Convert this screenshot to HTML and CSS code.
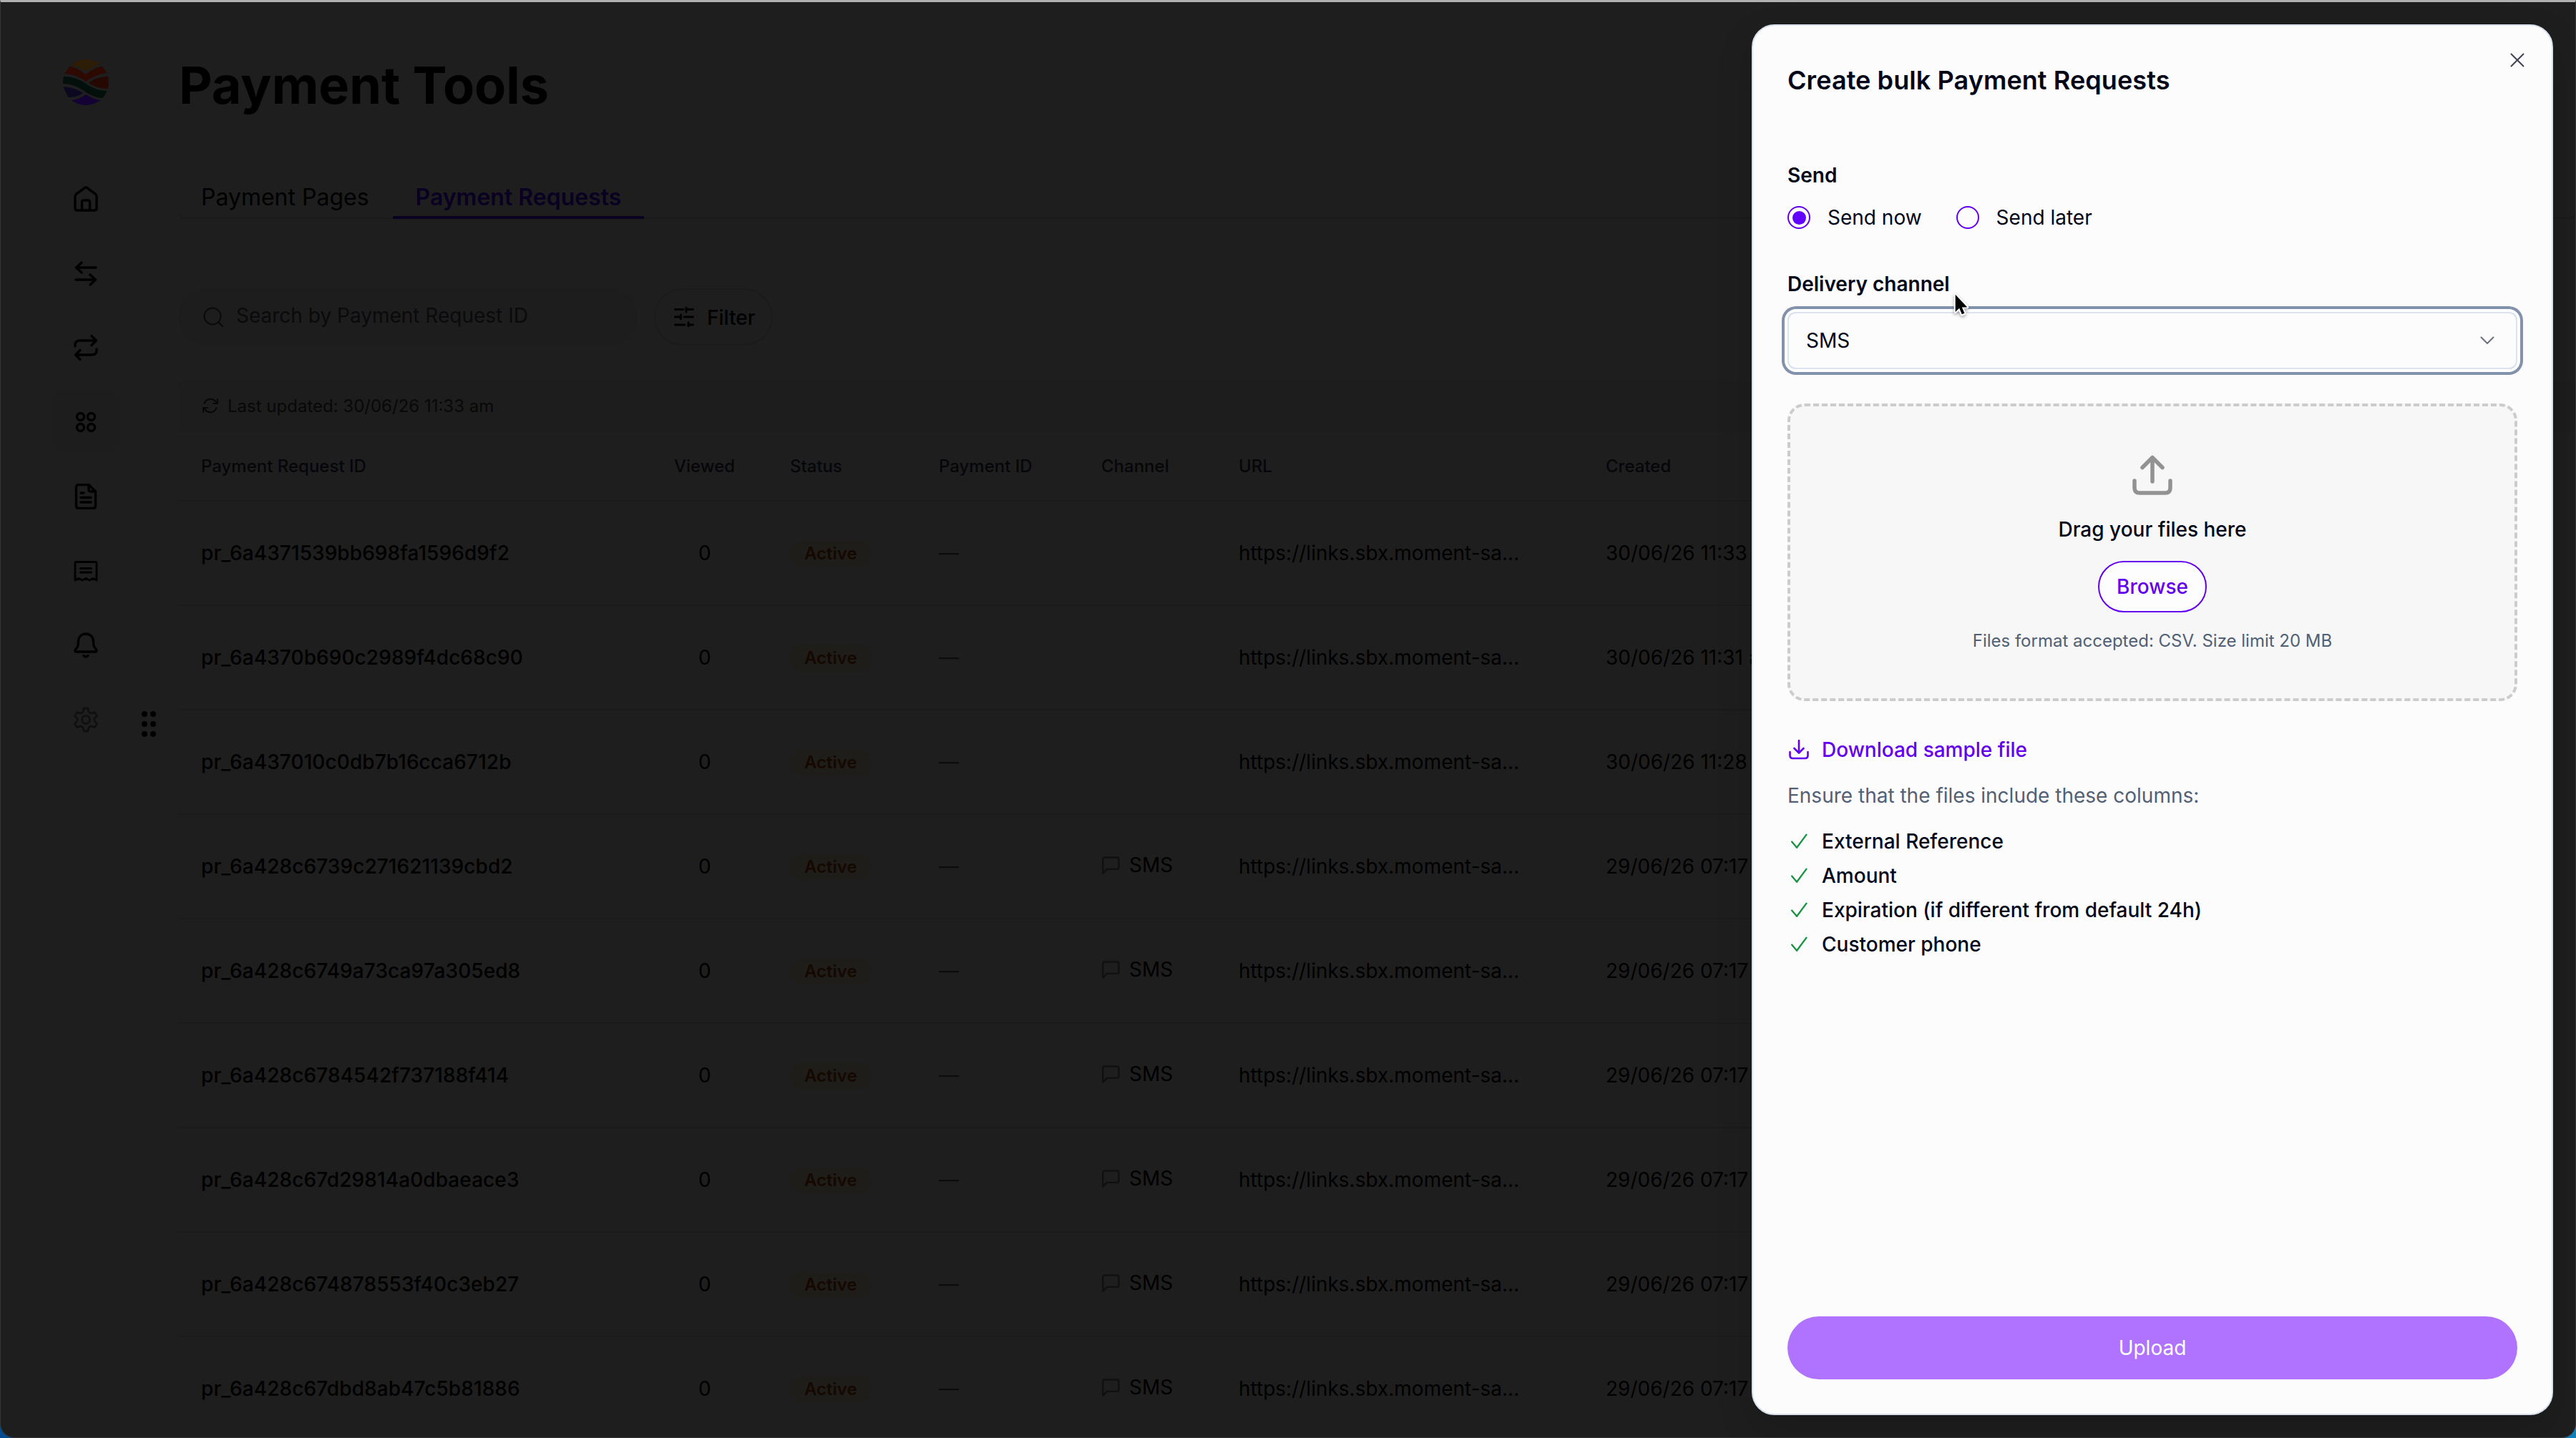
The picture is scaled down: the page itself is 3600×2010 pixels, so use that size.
FILE: index.html
```html
<!DOCTYPE html>
<html lang="en">
<head>
    <meta charset="UTF-8">
    <title>Payment Tools</title>
    <link rel="stylesheet" href="styles.css">
</head>
<body>

    <!-- Shared icons -->
    <svg class="sprite">
        <symbol id="icon-sms" viewBox="0 0 24 24"><path d="M21 15a2 2 0 0 1-2 2H7l-5 5V5a2 2 0 0 1 2-2h15a2 2 0 0 1 2 2z"/></symbol>
        <symbol id="icon-check" viewBox="0 0 24 24"><path d="M21 4 9.500 19.500 3.500 12.500"/></symbol>
    </svg>

    <div class="window">
        <nav class="sidebar">
            <svg class="logo" viewBox="0 0 64 64">
                <clipPath id="logo-clip"><circle cx="32" cy="32" r="32"/></clipPath>
                <g clip-path="url(#logo-clip)">
                    <path fill="#2e1d06" d="M0 0H64V4C50 6 40 11 32 17C26 12 20 9 12 9Z"/>
                    <path fill="#2e0902" d="M9 10C18 11 25 16 32 21C40 15 48 10 55 10L62 19C50 20 40 25 32 31C24 25 14 20 2 20Z"/>
                    <path fill="#260802" d="M36 33C44 27 52 24 64 24V41C52 41 44 38 36 33Z"/>
                    <path fill="#020f0a" d="M0 24C12 24 22 27 32 34C42 41 52 44 62 44L57 54C46 54 36 49 28 43C20 38 12 34 0 34Z"/>
                    <path fill="#0d0822" d="M0 38C12 39 20 42 28 47C22 51 16 53 7 53Z"/>
                    <path fill="#150234" d="M10 57C20 57 26 53 32 49C40 54 46 57 54 57L50 64H14Z"/>
                </g>
            </svg>
            <div class="nav-item">
                <svg class="icon" viewBox="0 0 36 36"><path d="M3 14.500Q3 12.500 4.600 11.200L16 2.800Q18 1.300 20 2.800L31.400 11.200Q33 12.500 33 14.500V31Q33 34 30 34H6Q3 34 3 31ZM12.500 34V22.500Q12.500 20 15 20H21Q23.500 20 23.500 22.500V34"/></svg>
            </div>
            <div class="nav-item">
                <svg class="icon" viewBox="0 0 36 36"><path d="M32 10H4.500M12 3 4.500 10 12 17M4 27H31.500M24 20 31.500 27 24 34"/></svg>
            </div>
            <div class="nav-item">
                <svg class="icon" viewBox="0 0 36 36"><path d="M3 16V14Q3 8 10 8H32M26 1.500 32.500 8 26 14.500M33 20V22Q33 28 26 28H4M10 21.500 3.500 28 10 34.500"/></svg>
            </div>
            <div class="nav-item active">
                <svg class="icon" viewBox="0 0 36 36"><circle cx="10.500" cy="10.500" r="5"/><circle cx="25.500" cy="10.500" r="5"/><circle cx="10.500" cy="25.500" r="5"/><circle cx="25.500" cy="25.500" r="5"/></svg>
            </div>
            <div class="nav-item">
                <svg class="icon" viewBox="0 0 36 36"><path d="M22 1.500H8Q4.500 1.500 4.500 5V31Q4.500 34.500 8 34.500H28Q31.500 34.500 31.500 31V11ZM22 1.500V8Q22 11 25 11H31.500M11 13H15M11 19.500H25M11 26H25"/></svg>
            </div>
            <div class="nav-item">
                <svg class="icon thin" viewBox="0 0 36 36"><path d="M3 31V7Q3 5.500 4.500 5.500H31.500Q33 5.500 33 7V31L28 28.500 23 31 18 28.500 13 31 8 28.500ZM10.500 14.500H25.500M10.500 20H25.500"/></svg>
            </div>
            <div class="nav-item">
                <svg class="icon" viewBox="0 0 36 36"><path d="M18 2C11 2 7.500 7 7.500 13C7.500 19 6 21 3.500 24Q2 27 4.500 27H31.500Q34 27 32.500 24C30 21 28.500 19 28.500 13C28.500 7 25 2 18 2ZM15 32.500Q18 35.500 21 32.500"/></svg>
            </div>
            <div class="nav-item muted">
                <svg class="icon thin" viewBox="0 0 36 36"><path d="M15.200 2H20.800L22 7.200 25.500 9.200 30.500 7.600 33.500 12.600 30 16.200V19.800L33.500 23.400 30.500 28.400 25.500 26.800 22 28.800 20.800 34H15.200L14 28.800 10.500 26.800 5.500 28.400 2.500 23.400 6 19.800V16.200L2.500 12.600 5.500 7.600 10.500 9.200 14 7.200Z"/><circle cx="18" cy="18" r="5.500"/></svg>
            </div>
            <svg class="drag-handle" viewBox="0 0 22 36"><circle cx="5" cy="4" r="4"/><circle cx="17" cy="4" r="4"/><circle cx="5" cy="18" r="4"/><circle cx="17" cy="18" r="4"/><circle cx="5" cy="32" r="4"/><circle cx="17" cy="32" r="4"/></svg>
        </nav>

        <main class="content">
            <h1>Payment Tools</h1>
            <div class="tabs">
                <a class="tab">Payment Pages</a>
                <a class="tab selected">Payment Requests</a>
            </div>
            <div class="toolbar">
                <div class="search">
                    <svg viewBox="0 0 28 28"><circle cx="13" cy="13" r="11.500"/><path d="M21.500 21.500 27 27"/></svg>
                    <span>Search by Payment Request ID</span>
                </div>
                <div class="filter">
                    <svg viewBox="0 0 28 28"><path d="M1.500 3.500H13M19 3.500H26.500M17 1V7M1.500 14H7.500M14 14H26.500M9.500 11V17M1.500 25H15M22 25H26.500M20 22V28"/></svg>
                    <span>Filter</span>
                </div>
            </div>
            <div class="updated">
                <svg viewBox="0 0 24 24"><path d="M22 3V9H16M2 21V15H8M3.500 9A9 9 0 0 1 19 6L22 9M20.500 15A9 9 0 0 1 5 18L2 15"/></svg>
                <span>Last updated: 30/06/26 11:33 am</span>
            </div>
            <table>
                <thead>
                    <tr>
                        <th class="col-id">Payment Request ID</th>
                        <th class="col-viewed">Viewed</th>
                        <th class="col-status">Status</th>
                        <th class="col-payment">Payment ID</th>
                        <th class="col-channel">Channel</th>
                        <th class="col-url">URL</th>
                        <th>Created</th>
                    </tr>
                </thead>
                <tbody id="requests"></tbody>
            </table>
        </main>
    </div>

    <aside class="drawer">
        <svg class="close" viewBox="0 0 20 20"><path d="M1.500 1.500 18.500 18.500M18.500 1.500 1.500 18.500"/></svg>
        <h2>Create bulk Payment Requests</h2>

        <div class="label">Send</div>
        <div class="radios">
            <span class="radio checked"></span><span class="radio-text">Send now</span>
            <span class="radio"></span><span class="radio-text">Send later</span>
        </div>

        <div class="label">Delivery channel</div>
        <div class="select">
            <span>SMS</span>
            <svg viewBox="0 0 20 12"><path d="M1.500 1.500 10 10 18.500 1.500"/></svg>
        </div>

        <div class="dropzone">
            <svg viewBox="0 0 56 56"><path d="M3 36V46Q3 53 10 53H46Q53 53 53 46V36M28 37V4M14 17.500 28 3.500 42 17.500"/></svg>
            <div class="drag-text">Drag your files here</div>
            <button class="browse">Browse</button>
            <div class="hint">Files format accepted: CSV. Size limit 20 MB</div>
        </div>

        <a class="download">
            <svg viewBox="0 0 28 28"><path d="M1.500 17V22Q1.500 26 5.500 26H22.500Q26.500 26 26.500 22V17M14 1V18M7.500 12 14 18.500 20.500 12"/></svg>
            <span>Download sample file</span>
        </a>
        <p class="ensure">Ensure that the files include these columns:</p>
        <ul>
            <li><svg><use href="#icon-check"/></svg>External Reference</li>
            <li><svg><use href="#icon-check"/></svg>Amount</li>
            <li><svg><use href="#icon-check"/></svg>Expiration (if different from default 24h)</li>
            <li><svg><use href="#icon-check"/></svg>Customer phone</li>
        </ul>

        <button class="upload">Upload</button>
    </aside>

    <svg class="cursor" viewBox="0 0 12 19"><path d="M1 1V15.500L4.300 12.400 6.500 17.500 8.700 16.600 6.500 11.600H11Z"/></svg>

    <script>
        const requests = [
            ['pr_6a4371539bb698fa1596d9f2', '', '30/06/26 11:33 am'],
            ['pr_6a4370b690c2989f4dc68c90', '', '30/06/26 11:31 am'],
            ['pr_6a437010c0db7b16cca6712b', '', '30/06/26 11:28 am'],
            ['pr_6a428c6739c271621139cbd2', 'SMS', '29/06/26 07:17 pm'],
            ['pr_6a428c6749a73ca97a305ed8', 'SMS', '29/06/26 07:17 pm'],
            ['pr_6a428c6784542f737188f414', 'SMS', '29/06/26 07:17 pm'],
            ['pr_6a428c67d29814a0dbaeace3', 'SMS', '29/06/26 07:17 pm'],
            ['pr_6a428c674878553f40c3eb27', 'SMS', '29/06/26 07:17 pm'],
            ['pr_6a428c67dbd8ab47c5b81886', 'SMS', '29/06/26 07:17 pm']
        ];

        document.getElementById('requests').innerHTML = requests.map(([id, channel, created]) => `
            <tr>
                <td class="id">${id}</td>
                <td class="viewed">0</td>
                <td><span class="badge">Active</span></td>
                <td class="dash">—</td>
                <td>${channel ? `<span class="channel"><svg><use href="#icon-sms"/></svg>${channel}</span>` : ''}</td>
                <td>https://links.sbx.moment-sa...</td>
                <td>${created}</td>
            </tr>
        `).join('');
    </script>

</body>
</html>
```
FILE: styles.css
```css
* {
    box-sizing: border-box;
}
body {
    margin: 0;
    width: 3600px;
    height: 2010px;
    overflow: hidden;
    background: linear-gradient(90deg, #034a91, #1480b8);
    font-family: Inter, sans-serif;
    font-size: 28px;
    color: #020617;
}
svg {
    display: block;
    flex: none;
    fill: none;
    stroke: currentColor;
    stroke-width: 2;
    stroke-linecap: round;
    stroke-linejoin: round;
}
.sprite {
    display: none;
}
.window {
    display: flex;
    width: 3600px;
    height: 2010px;
    overflow: hidden;
    background: #1e1e1e;
    border: 1px solid #363636;
    border-top: 3px solid #b0b0b0;
    border-radius: 0 0 20px 20px;
    color: #000;
}

/* Sidebar */
.sidebar {
    position: relative;
    flex: none;
    width: 249px;
    padding: 80px 0 0 71px;
}
.logo {
    width: 64px;
    height: 64px;
    margin: 0 0 89px 16px;
    stroke: none;
}
.nav-item {
    display: flex;
    align-items: center;
    justify-content: center;
    width: 96px;
    height: 84px;
    margin-bottom: 20px;
    border-radius: 16px;
}
.nav-item.active {
    background: #1d1d1d;
}
.nav-item.muted {
    color: #101010;
}
.icon {
    width: 36px;
    height: 36px;
    stroke-width: 3.4;
}
.icon.thin {
    stroke-width: 2.8;
}
.drag-handle {
    position: absolute;
    left: 196px;
    top: 991px;
    width: 22px;
    height: 36px;
    fill: #000;
    stroke: none;
}

/* Page */
.content {
    flex: 1;
}
h1 {
    margin: 72px 0 0;
    font-size: 72px;
    line-height: 88px;
    font-weight: 700;
}
.tabs {
    display: flex;
    height: 72px;
    margin-top: 71px;
    border-bottom: 2px solid #1a1a1a;
    border-radius: 8px;
}
.tab {
    height: 72px;
    padding: 0 33px 0 31px;
    font-size: 32px;
    line-height: 84px;
}
.tab.selected {
    padding: 0 32px;
    border-bottom: 4px solid #0a0022;
    color: #0a0022;
    font-weight: 600;
}
.toolbar {
    display: flex;
    gap: 24px;
    margin-top: 97px;
}
.search {
    display: flex;
    align-items: center;
    width: 640px;
    height: 80px;
    padding: 0 34px;
    border-radius: 40px;
    background: #1d1d1d;
    color: #0a0a0c;
}
.search svg {
    width: 28px;
    height: 28px;
    margin-right: 18px;
}
.search span {
    margin-top: -4px;
}
.filter {
    display: flex;
    align-items: center;
    width: 166px;
    height: 80px;
    padding-left: 26px;
    border: 2px solid #1b1b1b;
    border-radius: 40px;
    font-weight: 500;
}
.filter svg {
    width: 28px;
    height: 28px;
    margin-right: 18px;
    stroke-width: 2.8;
}
.filter span {
    margin-top: 2px;
}
.updated {
    display: flex;
    align-items: center;
    height: 72px;
    margin-top: 48px;
    padding-left: 32px;
    background: #1d1d1d;
    border-radius: 8px 8px 0 0;
    color: #080808;
    font-size: 24px;
}
.updated svg {
    width: 24px;
    height: 24px;
    margin-right: 12px;
}
table {
    width: 3300px;
    border-collapse: collapse;
    table-layout: fixed;
}
th, td {
    padding: 0;
    text-align: left;
    white-space: nowrap;
    border-bottom: 2px solid #1b1b1b;
}
th {
    height: 97px;
    color: #06060a;
    font-size: 24px;
    font-weight: 500;
}
td {
    height: 146px;
}
th:first-child, td:first-child {
    padding-left: 31px;
}
.col-id {
    width: 692px;
}
.col-viewed {
    width: 162px;
}
.col-status {
    width: 208px;
}
.col-payment {
    width: 227px;
}
.col-channel {
    width: 192px;
}
.col-url {
    width: 513px;
}
.id {
    font-weight: 500;
    letter-spacing: 0.08px;
}
.viewed {
    padding-left: 34px;
}
.badge {
    display: inline-block;
    padding: 0 20px;
    border-radius: 18px;
    background: #1f1d1a;
    color: #150800;
    font-size: 24px;
    line-height: 36px;
    font-weight: 600;
}
.dash {
    color: #0c0c0c;
}
.channel {
    display: flex;
    align-items: center;
    margin-top: -4px;
}
.channel svg {
    width: 28px;
    height: 28px;
    margin-right: 11px;
    color: #101010;
}

/* Drawer */
.drawer {
    position: absolute;
    left: 2448px;
    top: 34px;
    display: flex;
    flex-direction: column;
    width: 1120px;
    height: 1944px;
    padding: 52px 48px 48px;
    border: 2px solid #d9e0ec;
    border-radius: 32px;
    background: #fcfcfd;
    box-shadow: 0 20px 50px rgba(0, 0, 0, 0.15);
}
.close {
    position: absolute;
    right: 38px;
    top: 38px;
    width: 20px;
    height: 20px;
    color: #3f4250;
}
h2 {
    margin: 0 0 87px;
    font-size: 36px;
    line-height: 48px;
    font-weight: 600;
    letter-spacing: 0.08px;
}
.label {
    font-weight: 600;
    line-height: 44px;
}
.radios {
    display: flex;
    align-items: center;
    height: 40px;
    margin: 17px 0 51px;
}
.radio {
    width: 32px;
    height: 32px;
    border: 2px solid #6200ee;
    border-radius: 50%;
}
.radio.checked {
    padding: 4.500px;
    background: #6200ff content-box;
}
.radio-text {
    margin: 0 48px 0 24px;
}
.select {
    display: flex;
    align-items: center;
    justify-content: space-between;
    flex: none;
    height: 80px;
    margin-top: 17px;
    padding: 0 30px 0 24px;
    border: 2px solid #dde3f0;
    border-radius: 12px;
    box-shadow: 0 0 0 4px #fff, 0 0 0 8px #8292ab;
}
.select svg {
    width: 20px;
    height: 12px;
    color: #6b7080;
}
.dropzone {
    display: flex;
    flex: none;
    flex-direction: column;
    align-items: center;
    height: 416px;
    margin-top: 48px;
    padding-top: 68px;
    border: 4px dashed #ccc;
    border-radius: 24px;
    background: #f7f7f8;
}
.dropzone svg {
    width: 56px;
    height: 56px;
    color: #929292;
    stroke-width: 5.5;
}
.drag-text {
    margin-top: 28px;
    line-height: 40px;
    font-weight: 500;
}
button {
    font-family: inherit;
    font-size: 28px;
}
.browse {
    height: 72px;
    margin-top: 24px;
    padding: 0 24px;
    border: 2px solid #6200ee;
    border-radius: 36px;
    background: #fdfdfd;
    color: #6200ee;
    font-weight: 500;
}
.hint {
    margin-top: 24px;
    color: #516074;
    font-size: 24px;
    line-height: 32px;
}
.download {
    display: flex;
    align-items: center;
    height: 40px;
    margin-top: 48px;
    color: #6200ee;
    font-weight: 500;
}
.download svg {
    width: 28px;
    height: 28px;
    margin: 0 18px 0 2px;
    stroke-width: 2.6;
}
.ensure {
    margin: 24px 0 20px;
    color: #516074;
    line-height: 40px;
}
ul {
    margin: 0;
    padding: 0;
    list-style: none;
}
li {
    display: flex;
    align-items: center;
    height: 48px;
    font-weight: 500;
}
li svg {
    width: 28px;
    height: 28px;
    margin: 0 18px 0 2px;
    color: #16943f;
}
.upload {
    height: 88px;
    margin-top: auto;
    border: 0;
    border-radius: 44px;
    background: #b073ff;
    color: #fff;
}

.cursor {
    position: absolute;
    left: 2731px;
    top: 410px;
    width: 20px;
    height: 32px;
    overflow: visible;
    fill: #000;
    stroke: #fff;
    stroke-width: 2.4;
    paint-order: stroke;
    filter: drop-shadow(0 2px 2px rgba(0, 0, 0, 0.35));
}
```
